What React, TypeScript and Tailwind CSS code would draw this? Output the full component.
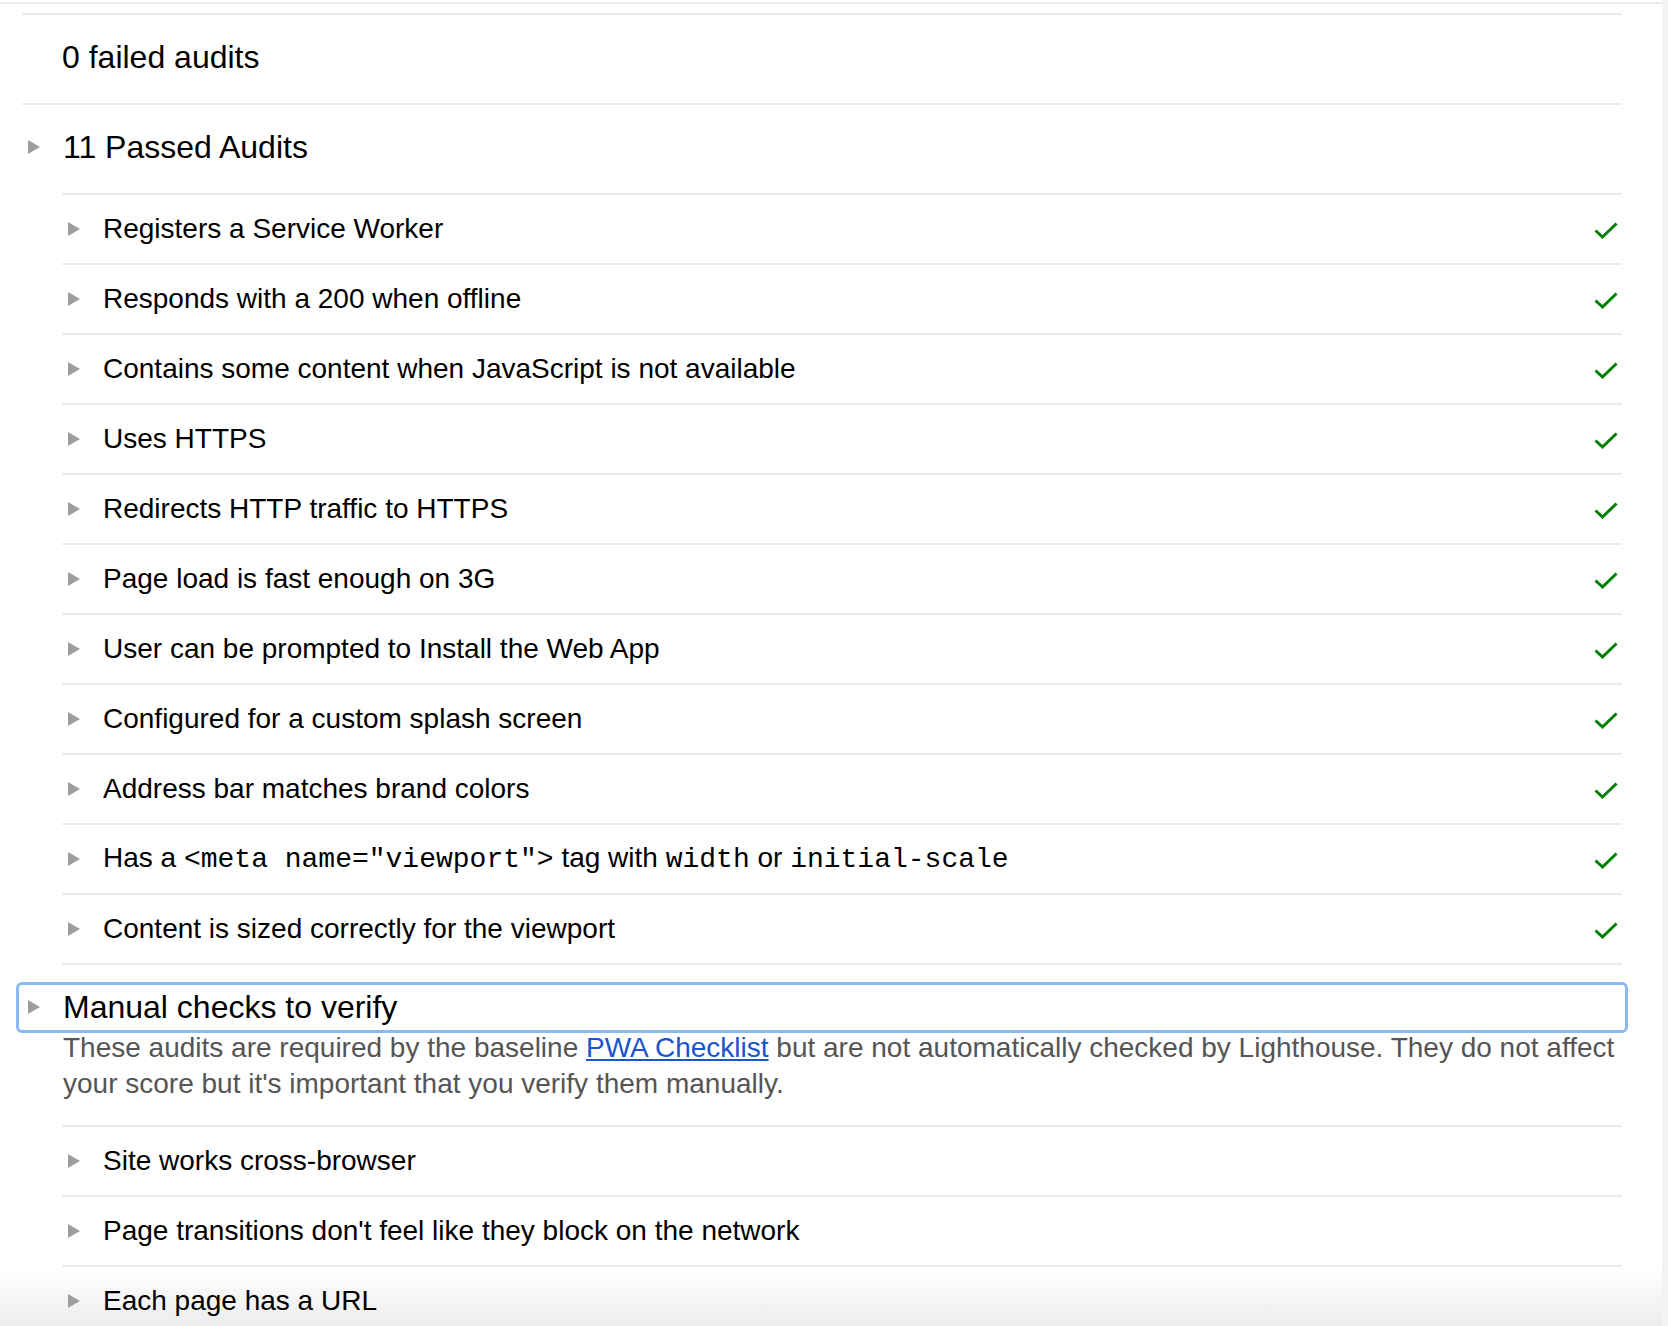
import React from 'react';

const passedAudits: React.ReactNode[] = [
  'Registers a Service Worker',
  'Responds with a 200 when offline',
  'Contains some content when JavaScript is not available',
  'Uses HTTPS',
  'Redirects HTTP traffic to HTTPS',
  'Page load is fast enough on 3G',
  'User can be prompted to Install the Web App',
  'Configured for a custom splash screen',
  'Address bar matches brand colors',
  <>
    Has a <code className="font-['Liberation_Mono',monospace]">&lt;meta name="viewport"&gt;</code> tag with{' '}
    <code className="font-['Liberation_Mono',monospace]">width</code> or{' '}
    <code className="font-['Liberation_Mono',monospace]">initial-scale</code>
  </>,
  'Content is sized correctly for the viewport',
];

const manualAudits = [
  'Site works cross-browser',
  "Page transitions don't feel like they block on the network",
  'Each page has a URL',
];

const Triangle = () => (
  <svg width="12" height="14" viewBox="0 0 12 14" className="shrink-0">
    <polygon points="0,0 12,7 0,14" fill="#9e9e9e" />
  </svg>
);

const Check = () => (
  <svg width="24" height="18" viewBox="0 0 24 18" className="mt-[2px] shrink-0">
    <polyline points="1.5,9.5 8.5,16 22.5,2.5" fill="none" stroke="#008000" strokeWidth="3" />
  </svg>
);

const AuditRow: React.FC<{ children: React.ReactNode; pass?: boolean }> = ({ children, pass }) => (
  <div className="flex h-[70px] items-center border-t-2 border-[#ebebeb] pl-[6px] pr-[4px]">
    <Triangle />
    <div className="ml-[23px] flex-1 whitespace-nowrap text-[28px] text-black">{children}</div>
    {pass && <Check />}
  </div>
);

export default function App() {
  return (
    <div className="flex h-[1326px] overflow-hidden bg-linear-to-b from-white from-[95.5%] to-[#ececec] font-['Liberation_Sans',Arial,sans-serif]">
      <div className="flex-1 pt-[2px]">
        <div className="h-[2px] bg-[#ebebeb]" />
        <div className="mt-[9px] pl-[22px] pr-[40px]">
          {/* failed */}
          <div className="flex h-[90px] items-center border-t-2 border-[#ebebeb] pb-[4px] pl-[40px] text-[32px] text-black">
            0 failed audits
          </div>

          {/* passed */}
          <div className="flex h-[90px] items-center border-t-2 border-[#ebebeb] pb-[4px] pl-[6px]">
            <Triangle />
            <span className="ml-[23px] text-[32px] text-black">11 Passed Audits</span>
          </div>
          <div className="ml-[40px] border-b-2 border-[#ebebeb]">
            {passedAudits.map((a, i) => (
              <AuditRow key={i} pass>
                {a}
              </AuditRow>
            ))}
          </div>

          {/* manual */}
          <div className="-mx-[3px] mt-[20px] flex h-[45px] items-center rounded-[3px] pb-[2px] pl-[9px] outline-3 outline-solid outline-[#8db9f1]">
            <Triangle />
            <span className="ml-[23px] text-[32px] text-black">Manual checks to verify</span>
          </div>
          <p className="ml-[41px] mb-[23px] whitespace-nowrap text-[28px] leading-[36px] text-[#555555]">
            These audits are required by the baseline{' '}
            <a href="#" className="text-[#1a55cc] underline">
              PWA Checklist
            </a>{' '}
            but are not automatically checked by Lighthouse. They do not affect
            <br />
            your score but it's important that you verify them manually.
          </p>
          <div className="ml-[40px] border-b-2 border-[#ebebeb]">
            {manualAudits.map((a) => (
              <AuditRow key={a}>{a}</AuditRow>
            ))}
          </div>
        </div>
      </div>
      <div className="w-[6px] bg-[#f3f3f3]" />
    </div>
  );
}
